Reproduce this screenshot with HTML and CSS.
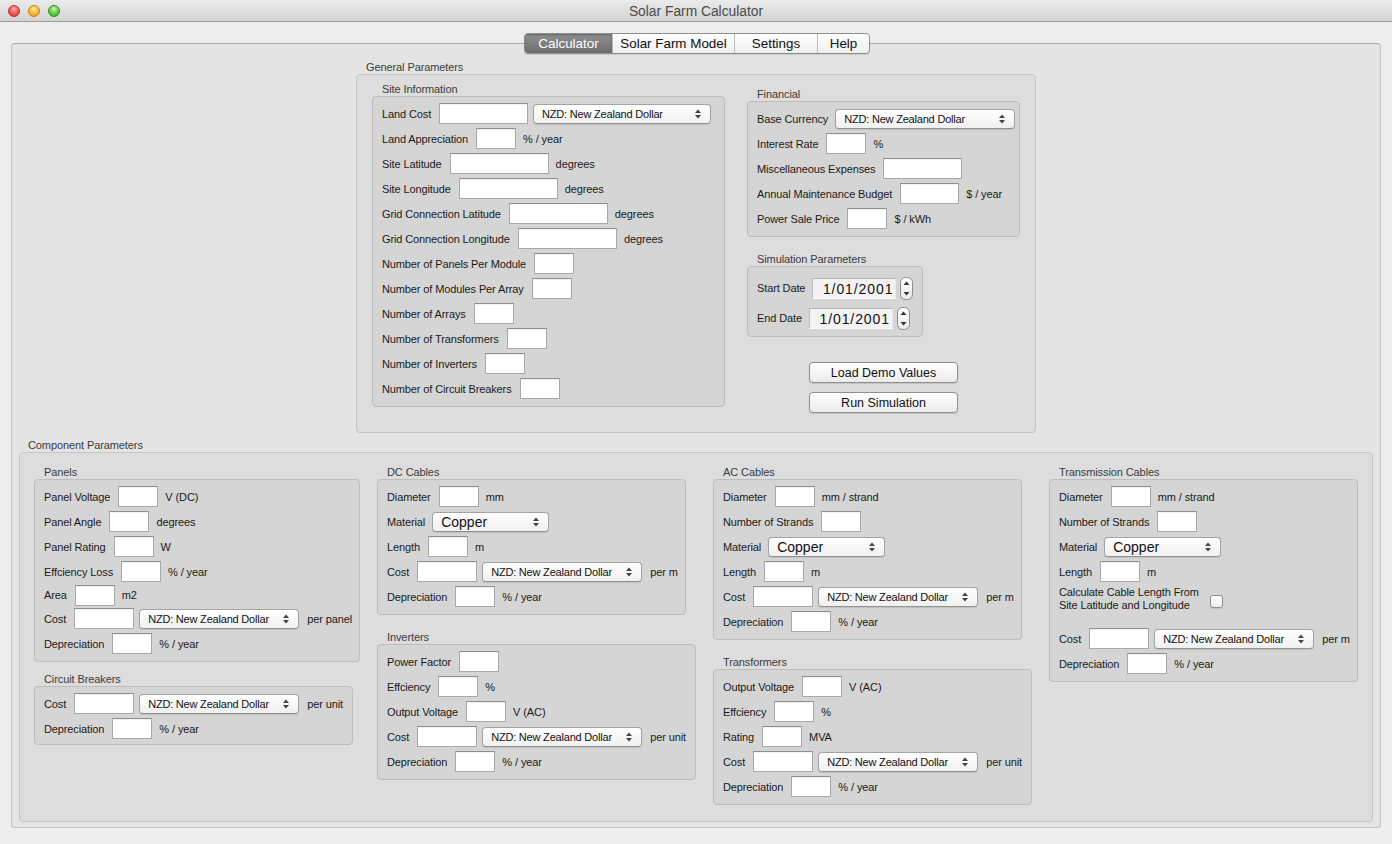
FILE: index.html
```html
<!DOCTYPE html>
<html>
<head>
<meta charset="utf-8">
<title>Solar Farm Calculator</title>
<link rel="stylesheet" href="styles.css">
</head>
<body>
<div class="titlebar">
  <div class="lights"><span class="light red"></span><span class="light yellow"></span><span class="light green"></span></div>
  <div class="wtitle">Solar Farm Calculator</div>
</div>
<div class="content">
  <div class="tabs">
    <div class="tab sel-tab t1">Calculator</div>
    <div class="tab t2">Solar Farm Model</div>
    <div class="tab t3">Settings</div>
    <div class="tab t4">Help</div>
  </div>
  <div class="tabbox">
    <div class="gen-wrap">
      <div class="gtitle">General Parameters</div>
      <div class="box general">
        <div class="col">
          <div class="gtitle">Site Information</div>
          <div class="box sub site">
            <div class="row"><span class="lbl">Land Cost</span><span class="in w89"></span><span class="sel s178"><span>NZD: New Zealand Dollar</span><svg class="arr" width="6" height="10" viewBox="0 0 6 10"><polygon points="0,4 3,0.5 6,4"/><polygon points="0,6 3,9.5 6,6"/></svg></span></div>
            <div class="row"><span class="lbl">Land Appreciation</span><span class="in w40"></span><span class="unit">% / year</span></div>
            <div class="row"><span class="lbl">Site Latitude</span><span class="in w99"></span><span class="unit">degrees</span></div>
            <div class="row"><span class="lbl">Site Longitude</span><span class="in w99"></span><span class="unit">degrees</span></div>
            <div class="row"><span class="lbl">Grid Connection Latitude</span><span class="in w99"></span><span class="unit">degrees</span></div>
            <div class="row"><span class="lbl">Grid Connection Longitude</span><span class="in w99"></span><span class="unit">degrees</span></div>
            <div class="row"><span class="lbl">Number of Panels Per Module</span><span class="in w40"></span></div>
            <div class="row"><span class="lbl">Number of Modules Per Array</span><span class="in w40"></span></div>
            <div class="row"><span class="lbl">Number of Arrays</span><span class="in w40"></span></div>
            <div class="row"><span class="lbl">Number of Transformers</span><span class="in w40"></span></div>
            <div class="row"><span class="lbl">Number of Inverters</span><span class="in w40"></span></div>
            <div class="row"><span class="lbl">Number of Circuit Breakers</span><span class="in w40"></span></div>
          </div>
        </div>
        <div class="col right">
          <div class="gtitle">Financial</div>
          <div class="box sub financial">
            <div class="row"><span class="lbl">Base Currency</span><span class="sel s180"><span>NZD: New Zealand Dollar</span><svg class="arr" width="6" height="10" viewBox="0 0 6 10"><polygon points="0,4 3,0.5 6,4"/><polygon points="0,6 3,9.5 6,6"/></svg></span></div>
            <div class="row"><span class="lbl">Interest Rate</span><span class="in w40"></span><span class="unit">%</span></div>
            <div class="row"><span class="lbl">Miscellaneous Expenses</span><span class="in w79"></span></div>
            <div class="row"><span class="lbl">Annual Maintenance Budget</span><span class="in w59"></span><span class="unit">$ / year</span></div>
            <div class="row"><span class="lbl">Power Sale Price</span><span class="in w40"></span><span class="unit">$ / kWh</span></div>
          </div>
          <div class="gtitle sim-title">Simulation Parameters</div>
          <div class="box sub sim">
            <div class="row drow"><span class="lbl">Start Date</span><span class="date">1/01/2001</span><svg class="step" width="13" height="23" viewBox="0 0 13 23"><defs><linearGradient id="sg" x1="0" y1="0" x2="0" y2="1"><stop offset="0" stop-color="#ffffff"/><stop offset="1" stop-color="#e9e9e9"/></linearGradient></defs><rect x="0.5" y="0.5" width="12" height="22" rx="5" fill="url(#sg)" stroke="#8a8a8a"/><polygon points="3.5,8 6.5,4.5 9.5,8" fill="#333"/><polygon points="3.5,15 6.5,18.5 9.5,15" fill="#333"/></svg></div>
            <div class="row drow"><span class="lbl">End Date</span><span class="date">1/01/2001</span><svg class="step" width="13" height="23" viewBox="0 0 13 23"><rect x="0.5" y="0.5" width="12" height="22" rx="5" fill="url(#sg)" stroke="#8a8a8a"/><polygon points="3.5,8 6.5,4.5 9.5,8" fill="#333"/><polygon points="3.5,15 6.5,18.5 9.5,15" fill="#333"/></svg></div>
          </div>
          <div class="btn first">Load Demo Values</div>
          <div class="btn">Run Simulation</div>
        </div>
      </div>
    </div>

    <div class="gtitle comp-title">Component Parameters</div>
    <div class="box comp">
      <div class="ccol">
        <div class="gtitle">Panels</div>
        <div class="box sub g326">
          <div class="row"><span class="lbl">Panel Voltage</span><span class="in w40"></span><span class="unit">V (DC)</span></div>
          <div class="row"><span class="lbl">Panel Angle</span><span class="in w40"></span><span class="unit">degrees</span></div>
          <div class="row"><span class="lbl">Panel Rating</span><span class="in w40"></span><span class="unit">W</span></div>
          <div class="row"><span class="lbl">Effciency Loss</span><span class="in w40"></span><span class="unit">% / year</span></div>
          <div class="row short"><span class="lbl">Area</span><span class="in w40"></span><span class="unit">m2</span></div>
          <div class="row"><span class="lbl">Cost</span><span class="in w60"></span><span class="sel s160"><span>NZD: New Zealand Dollar</span><svg class="arr" width="6" height="10" viewBox="0 0 6 10"><polygon points="0,4 3,0.5 6,4"/><polygon points="0,6 3,9.5 6,6"/></svg></span><span class="unit">per panel</span></div>
          <div class="row"><span class="lbl">Depreciation</span><span class="in w40"></span><span class="unit">% / year</span></div>
        </div>
        <div class="gtitle gap10">Circuit Breakers</div>
        <div class="box sub g319 cb">
          <div class="row"><span class="lbl">Cost</span><span class="in w60"></span><span class="sel s160"><span>NZD: New Zealand Dollar</span><svg class="arr" width="6" height="10" viewBox="0 0 6 10"><polygon points="0,4 3,0.5 6,4"/><polygon points="0,6 3,9.5 6,6"/></svg></span><span class="unit">per unit</span></div>
          <div class="row"><span class="lbl">Depreciation</span><span class="in w40"></span><span class="unit">% / year</span></div>
        </div>
      </div>

      <div class="ccol">
        <div class="gtitle">DC Cables</div>
        <div class="box sub g309">
          <div class="row"><span class="lbl">Diameter</span><span class="in w40"></span><span class="unit">mm</span></div>
          <div class="row"><span class="lbl">Material</span><span class="sel s117 big"><span>Copper</span><svg class="arr" width="6" height="10" viewBox="0 0 6 10"><polygon points="0,4 3,0.5 6,4"/><polygon points="0,6 3,9.5 6,6"/></svg></span></div>
          <div class="row"><span class="lbl">Length</span><span class="in w40"></span><span class="unit">m</span></div>
          <div class="row"><span class="lbl">Cost</span><span class="in w60"></span><span class="sel s160"><span>NZD: New Zealand Dollar</span><svg class="arr" width="6" height="10" viewBox="0 0 6 10"><polygon points="0,4 3,0.5 6,4"/><polygon points="0,6 3,9.5 6,6"/></svg></span><span class="unit">per m</span></div>
          <div class="row"><span class="lbl">Depreciation</span><span class="in w40"></span><span class="unit">% / year</span></div>
        </div>
        <div class="gtitle gap15">Inverters</div>
        <div class="box sub g319">
          <div class="row"><span class="lbl">Power Factor</span><span class="in w40"></span></div>
          <div class="row"><span class="lbl">Effciency</span><span class="in w40"></span><span class="unit">%</span></div>
          <div class="row"><span class="lbl">Output Voltage</span><span class="in w40"></span><span class="unit">V (AC)</span></div>
          <div class="row"><span class="lbl">Cost</span><span class="in w60"></span><span class="sel s160"><span>NZD: New Zealand Dollar</span><svg class="arr" width="6" height="10" viewBox="0 0 6 10"><polygon points="0,4 3,0.5 6,4"/><polygon points="0,6 3,9.5 6,6"/></svg></span><span class="unit">per unit</span></div>
          <div class="row"><span class="lbl">Depreciation</span><span class="in w40"></span><span class="unit">% / year</span></div>
        </div>
      </div>

      <div class="ccol">
        <div class="gtitle">AC Cables</div>
        <div class="box sub g309">
          <div class="row"><span class="lbl">Diameter</span><span class="in w40"></span><span class="unit">mm / strand</span></div>
          <div class="row"><span class="lbl">Number of Strands</span><span class="in w40"></span></div>
          <div class="row"><span class="lbl">Material</span><span class="sel s117 big"><span>Copper</span><svg class="arr" width="6" height="10" viewBox="0 0 6 10"><polygon points="0,4 3,0.5 6,4"/><polygon points="0,6 3,9.5 6,6"/></svg></span></div>
          <div class="row"><span class="lbl">Length</span><span class="in w40"></span><span class="unit">m</span></div>
          <div class="row"><span class="lbl">Cost</span><span class="in w60"></span><span class="sel s160"><span>NZD: New Zealand Dollar</span><svg class="arr" width="6" height="10" viewBox="0 0 6 10"><polygon points="0,4 3,0.5 6,4"/><polygon points="0,6 3,9.5 6,6"/></svg></span><span class="unit">per m</span></div>
          <div class="row"><span class="lbl">Depreciation</span><span class="in w40"></span><span class="unit">% / year</span></div>
        </div>
        <div class="gtitle gap15">Transformers</div>
        <div class="box sub g319">
          <div class="row"><span class="lbl">Output Voltage</span><span class="in w40"></span><span class="unit">V (AC)</span></div>
          <div class="row"><span class="lbl">Effciency</span><span class="in w40"></span><span class="unit">%</span></div>
          <div class="row"><span class="lbl">Rating</span><span class="in w40"></span><span class="unit">MVA</span></div>
          <div class="row"><span class="lbl">Cost</span><span class="in w60"></span><span class="sel s160"><span>NZD: New Zealand Dollar</span><svg class="arr" width="6" height="10" viewBox="0 0 6 10"><polygon points="0,4 3,0.5 6,4"/><polygon points="0,6 3,9.5 6,6"/></svg></span><span class="unit">per unit</span></div>
          <div class="row"><span class="lbl">Depreciation</span><span class="in w40"></span><span class="unit">% / year</span></div>
        </div>
      </div>

      <div class="ccol">
        <div class="gtitle">Transmission Cables</div>
        <div class="box sub g309">
          <div class="row"><span class="lbl">Diameter</span><span class="in w40"></span><span class="unit">mm / strand</span></div>
          <div class="row"><span class="lbl">Number of Strands</span><span class="in w40"></span></div>
          <div class="row"><span class="lbl">Material</span><span class="sel s117 big"><span>Copper</span><svg class="arr" width="6" height="10" viewBox="0 0 6 10"><polygon points="0,4 3,0.5 6,4"/><polygon points="0,6 3,9.5 6,6"/></svg></span></div>
          <div class="row"><span class="lbl">Length</span><span class="in w40"></span><span class="unit">m</span></div>
          <div class="row calc"><span class="lbl two">Calculate Cable Length From<br>Site Latitude and Longitude</span><span class="check"></span></div>
          <div class="row"><span class="lbl">Cost</span><span class="in w60"></span><span class="sel s160"><span>NZD: New Zealand Dollar</span><svg class="arr" width="6" height="10" viewBox="0 0 6 10"><polygon points="0,4 3,0.5 6,4"/><polygon points="0,6 3,9.5 6,6"/></svg></span><span class="unit">per m</span></div>
          <div class="row"><span class="lbl">Depreciation</span><span class="in w40"></span><span class="unit">% / year</span></div>
        </div>
      </div>
    </div>
  </div>
</div>
</body>
</html>
```
FILE: styles.css
```css
* { box-sizing: border-box; margin: 0; padding: 0; }
html, body { width: 1392px; height: 844px; overflow: hidden; }
body {
  background: #ededed;
  font-family: "Liberation Sans", Arial, sans-serif;
  font-size: 11px;
  color: #1c1c1c;
}

/* title bar */
.titlebar {
  position: relative;
  height: 22px;
  background: linear-gradient(#ebebeb, #d3d3d3);
  border-bottom: 1px solid #9d9d9d;
  display: flex;
  align-items: center;
  justify-content: center;
}
.lights { position: absolute; left: 8px; top: 5px; display: flex; gap: 8px; }
.light { width: 12px; height: 12px; border-radius: 50%; display: block; }
.red { background: radial-gradient(circle at 50% 30%, #ffb3b1 0, #f4605b 45%, #d4302b 100%); border: 1px solid #b8322e; }
.yellow { background: radial-gradient(circle at 50% 30%, #ffe9a6 0, #f9bf3b 45%, #d9951a 100%); border: 1px solid #c08318; }
.green { background: radial-gradient(circle at 50% 30%, #c9f5b0 0, #6fd053 45%, #35a52a 100%); border: 1px solid #2f8e26; }
.wtitle { font-size: 13.8px; color: #4a4a4a; padding-top: 1px; }

/* tabs */
.content { padding: 0 11px; }
.tabs {
  position: relative;
  z-index: 2;
  display: flex;
  width: 346px;
  height: 21px;
  margin: 11px 0 0 513px;
  border: 1px solid #8e8e8e;
  border-radius: 4px;
  background: linear-gradient(#ffffff, #ededed);
  box-shadow: 0 1px 1px rgba(0,0,0,0.12);
  overflow: hidden;
}
.tab {
  font-size: 13.4px;
  color: #111;
  display: flex;
  align-items: center;
  justify-content: center;
  border-left: 1px solid #bdbdbd;
  height: 100%;
}
.tab.t1 { width: 87px; border-left: none; }
.tab.t2 { width: 122px; }
.tab.t3 { width: 83px; }
.tab.t4 { width: 52px; }
.sel-tab {
  background: linear-gradient(#8f8f8f, #6e6e6e);
  color: #fff;
  box-shadow: inset 0 1px 2px rgba(0,0,0,0.3);
}

.tabbox {
  margin-top: -11px;
  height: 785px;
  background: #e4e4e4;
  border: 1px solid #c4c4c4;
  border-top-color: #a8a8a8;
  border-radius: 4px;
  padding: 16px 7px 0;
}

/* boxes */
.gtitle {
  height: 14px;
  line-height: 14px;
  padding-left: 10px;
  color: #3b3b3b;
  font-size: 11px;
  white-space: nowrap;
  letter-spacing: -0.1px;
}
.box {
  border: 1px solid #c6c6c6;
  border-radius: 4px;
  background: #dddddd;
}
.sub {
  background: #d5d5d5;
  border-color: #bdbdbd;
  padding: 4px 0 5px;
}

.gen-wrap { width: 680px; margin: 0 auto; }
.general {
  height: 359px;
  display: flex;
  align-items: flex-start;
  gap: 22px;
  padding: 7px 0 0 15px;
}
.site { width: 353px; }
.right { padding-top: 5px; }
.financial { width: 273px; }
.sim-title { margin-top: 15px; }
.sim { width: 176px; padding: 6px 0 3px; }

/* rows */
.row {
  display: flex;
  align-items: center;
  height: 25px;
  padding-left: 9px;
  gap: 7px;
  white-space: nowrap;
}
.row.short { height: 22px; }
.row.calc { height: 42px; align-items: flex-start; padding-top: 2px; }
.row.drow { height: 30px; gap: 4px; }
.lbl { color: #1a1a1a; letter-spacing: -0.12px; }
.lbl.two { line-height: 13px; }
.unit { color: #1a1a1a; letter-spacing: -0.1px; }

.date {
  display: block;
  width: 84px;
  height: 21px;
  line-height: 20px;
  background: #f3f3f3;
  border: 1px solid;
  border-color: #b4b4b4 #e9e9e9 #fbfbfb #bcbcbc;
  font-size: 14px;
  letter-spacing: 0.9px;
  text-align: right;
  padding-right: 2px;
  color: #111;
}
.drow .lbl { margin-right: 3px; }
.step { display: block; }

.btn {
  width: 149px;
  height: 21px;
  margin-left: 62px;
  margin-top: 9px;
  border: 1px solid #8f8f8f;
  border-radius: 4px;
  background: linear-gradient(#ffffff, #ebebeb);
  box-shadow: 0 1px 1px rgba(0,0,0,0.12);
  font-size: 12.5px;
  color: #111;
  display: flex;
  align-items: center;
  justify-content: center;
}
.btn.first { margin-top: 25px; }

.comp-title { margin-top: 5px; padding-left: 9px; }
.comp {
  height: 370px;
  display: flex;
  align-items: flex-start;
  gap: 17px;
  padding: 12px 0 0 14px;
}
.ccol { display: flex; flex-direction: column; }
.g326 { width: 326px; }
.g319 { width: 319px; }
.g309 { width: 309px; }
.cb { padding-bottom: 3px; }
.gap10 { margin-top: 10px; }
.gap15 { margin-top: 15px; }

.in {
  display: block;
  height: 21px;
  background: #fff;
  border: 1px solid #a9a9a9;
  border-top-color: #8e8e8e;
  box-shadow: inset 0 1px 1px rgba(0,0,0,0.06);
}
.w40 { width: 40px; }
.w59 { width: 59px; }
.w60 { width: 60px; }
.w79 { width: 79px; }
.w89 { width: 89px; }
.w99 { width: 99px; }
.lbl + .in { margin-left: 1px; }

.sel {
  display: flex;
  align-items: center;
  justify-content: space-between;
  height: 20px;
  border: 1px solid #a3a3a3;
  border-bottom-color: #939393;
  border-radius: 4px;
  background: linear-gradient(#ffffff, #f0f0f0);
  box-shadow: 0 1px 1px rgba(0,0,0,0.1);
  padding: 0 9px 0 8px;
  font-size: 11px;
  letter-spacing: -0.2px;
  color: #111;
}
.in + .sel { margin-left: -2px; }
.sel + .unit { margin-left: 1px; }
.s117 { width: 117px; }
.s160 { width: 160px; }
.s178 { width: 178px; }
.s180 { width: 180px; }
.sel.big { font-size: 14px; letter-spacing: 0; }
.arr { display: block; fill: #444; }

.check {
  display: block;
  width: 13px;
  height: 13px;
  margin: 9px 0 0 4px;
  border: 1px solid #8e8e8e;
  border-radius: 3px;
  background: linear-gradient(#ffffff, #ececec);
  box-shadow: 0 1px 1px rgba(0,0,0,0.1);
}
```
